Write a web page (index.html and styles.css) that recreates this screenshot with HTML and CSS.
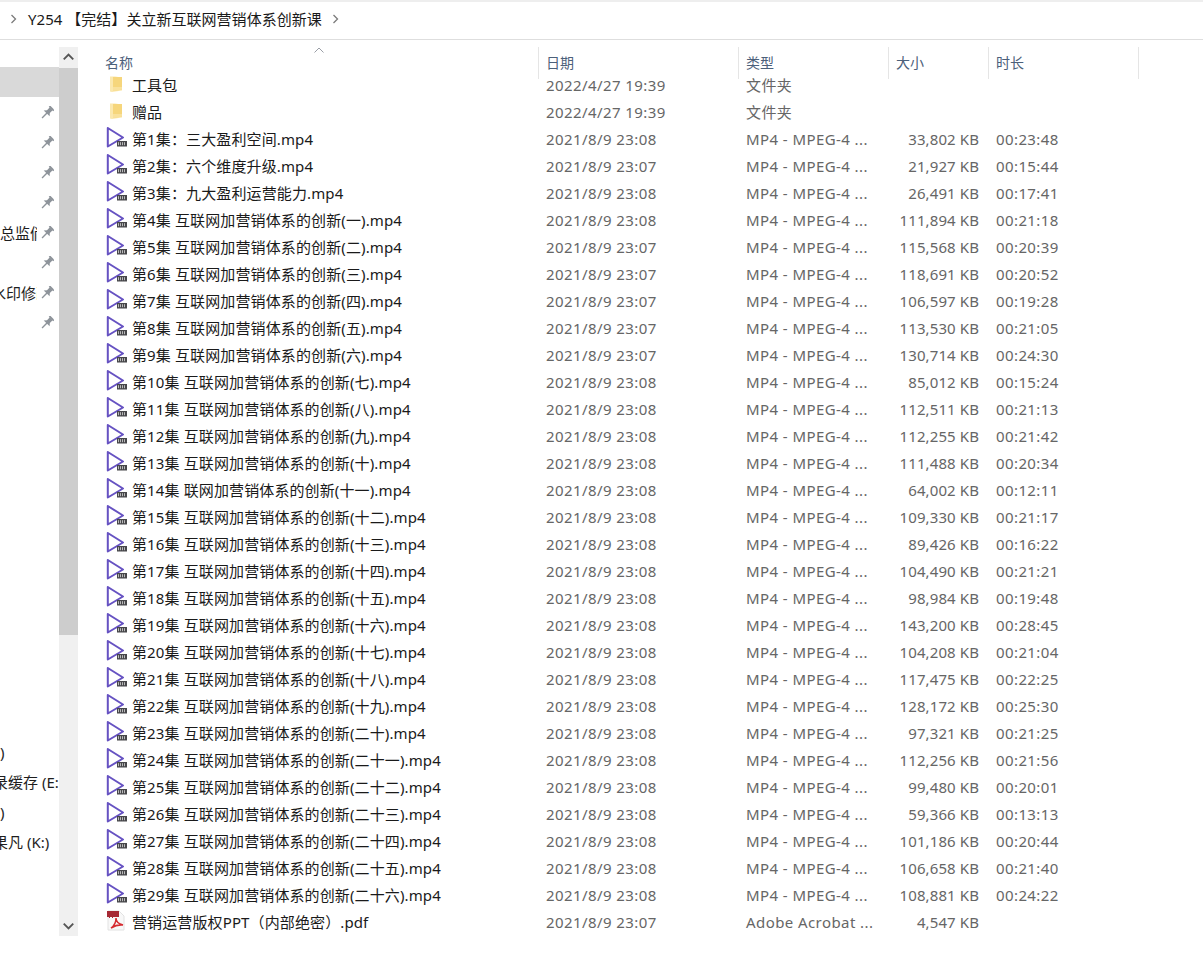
FILE: index.html
```html
<!DOCTYPE html>
<html lang="zh-CN">
<head>
<meta charset="utf-8">
<title>Y254 【完结】关立新互联网营销体系创新课</title>
<link rel="stylesheet" href="styles.css">
</head>
<body>
<svg class="defs" width="0" height="0" aria-hidden="true">
  <symbol id="folder" viewBox="0 0 22 22"><path d="M5 3.500h5l7 1v13l-10 1.500-2-.5z" fill="#fbe8ae"/><path d="M8 4h9v12.500L9 18l-1-1z" fill="#f6d67c"/><path d="M8 14h9v2.500L9 18l-1-1z" fill="#f9e19c"/></symbol>
  <symbol id="play" viewBox="0 0 22 22"><path d="M2.800 1V19.500L18 10.500Z" fill="#fff" stroke="#6652c2" stroke-width="2" stroke-linejoin="round"/><rect x="12" y="14" width="10" height="5.500" fill="#47474a"/><path d="M13.500 15.200v3M15.500 15.200v3M17.500 15.200v3M19.500 15.200v3" stroke="#d8d8d8" stroke-width=".8"/></symbol>
  <symbol id="pdf" viewBox="0 0 22 22"><path d="M3 1h11l5 5v14H3z" fill="#f8f8f8" stroke="#e2e2e2"/><rect x="2" y="1" width="12" height="6" fill="#a62a35"/><path d="M4 7.500h1M7 7.500h1" stroke="#a62a35"/><path d="M6 18c3-2 5-6 5-10 0 4 3 6 7 7-4-.5-8 .5-12 3z" fill="none" stroke="#d52b30" stroke-width="1.500"/></symbol>
  <symbol id="pin" viewBox="0 0 14 14"><g transform="rotate(45 7 7)" fill="#8d939a"><rect x="3.800" y="-.5" width="6.400" height="1.800"/><path d="M5 1h4v4l2.200 2.500H2.800L5 5z"/><path d="M6.300 7h1.400v7H6.300z"/></g></symbol>
</svg>
<header class="crumbs">
  <svg class="chev" viewBox="0 0 8 10"><path d="M1.500 1l4 4-4 4" fill="none" stroke="#7b7b7b" stroke-width="1.300"/></svg>
  <span class="crumb">Y254 【完结】关立新互联网营销体系创新课</span>
  <svg class="chev chev-end" viewBox="0 0 8 10"><path d="M1.500 1l4 4-4 4" fill="none" stroke="#7b7b7b" stroke-width="1.300"/></svg>
</header>
<main class="pane">
  <nav class="nav">
    <div class="nav-list">
      <div class="nav-gap"></div>
      <div class="nav-row nav-sel"></div>
      <div class="nav-row"><svg class="pin"><use href="#pin"/></svg></div>
      <div class="nav-row"><svg class="pin"><use href="#pin"/></svg></div>
      <div class="nav-row"><svg class="pin"><use href="#pin"/></svg></div>
      <div class="nav-row"><svg class="pin"><use href="#pin"/></svg></div>
      <div class="nav-row"><span class="nav-clip"><span class="nav-text">总监倘</span></span><svg class="pin"><use href="#pin"/></svg></div>
      <div class="nav-row"><svg class="pin"><use href="#pin"/></svg></div>
      <div class="nav-row"><span class="nav-clip"><span class="nav-text nav-off">水印修改</span></span><svg class="pin"><use href="#pin"/></svg></div>
      <div class="nav-row"><svg class="pin"><use href="#pin"/></svg></div>
      <div class="nav-spacer"></div>
      <div class="drive"><span class="drive-text">)</span></div>
      <div class="drive"><span class="drive-text drive-off">录缓存 (E:</span></div>
      <div class="drive"><span class="drive-text">)</span></div>
      <div class="drive"><span class="drive-text drive-off">果凡 (K:)</span></div>
    </div>
    <div class="scroll">
      <svg class="arrow" viewBox="0 0 20 20"><path d="M5 12l5-5 5 5" fill="none" stroke="#555" stroke-width="2"/></svg>
      <div class="thumb"></div>
      <div class="track"></div>
      <svg class="arrow" viewBox="0 0 20 20"><path d="M5 8l5 5 5-5" fill="none" stroke="#555" stroke-width="2"/></svg>
    </div>
  </nav>
  <section class="files">
    <div class="head">
      <div class="h h-name">名称<svg class="sort" viewBox="0 0 10 6"><path d="M.5 5.500L5 1l4.500 4.500" fill="none" stroke="#9a9ea6"/></svg></div>
      <div class="h h-date">日期</div>
      <div class="h h-type">类型</div>
      <div class="h h-size">大小</div>
      <div class="h h-dur">时长</div>
    </div>
    <div class="row"><span class="c-name"><svg class="ic"><use href="#folder"/></svg>工具包</span><span class="c-date">2022/4/27 19:39</span><span class="c-type">文件夹</span></div>
    <div class="row"><span class="c-name"><svg class="ic"><use href="#folder"/></svg>赠品</span><span class="c-date">2022/4/27 19:39</span><span class="c-type">文件夹</span></div>
    <div class="row"><span class="c-name"><svg class="ic"><use href="#play"/></svg>第1集：三大盈利空间.mp4</span><span class="c-date">2021/8/9 23:08</span><span class="c-type">MP4 - MPEG-4 ...</span><span class="c-size">33,802 KB</span><span class="c-dur">00:23:48</span></div>
    <div class="row"><span class="c-name"><svg class="ic"><use href="#play"/></svg>第2集：六个维度升级.mp4</span><span class="c-date">2021/8/9 23:07</span><span class="c-type">MP4 - MPEG-4 ...</span><span class="c-size">21,927 KB</span><span class="c-dur">00:15:44</span></div>
    <div class="row"><span class="c-name"><svg class="ic"><use href="#play"/></svg>第3集：九大盈利运营能力.mp4</span><span class="c-date">2021/8/9 23:08</span><span class="c-type">MP4 - MPEG-4 ...</span><span class="c-size">26,491 KB</span><span class="c-dur">00:17:41</span></div>
    <div class="row"><span class="c-name"><svg class="ic"><use href="#play"/></svg>第4集 互联网加营销体系的创新(一).mp4</span><span class="c-date">2021/8/9 23:08</span><span class="c-type">MP4 - MPEG-4 ...</span><span class="c-size">111,894 KB</span><span class="c-dur">00:21:18</span></div>
    <div class="row"><span class="c-name"><svg class="ic"><use href="#play"/></svg>第5集 互联网加营销体系的创新(二).mp4</span><span class="c-date">2021/8/9 23:07</span><span class="c-type">MP4 - MPEG-4 ...</span><span class="c-size">115,568 KB</span><span class="c-dur">00:20:39</span></div>
    <div class="row"><span class="c-name"><svg class="ic"><use href="#play"/></svg>第6集 互联网加营销体系的创新(三).mp4</span><span class="c-date">2021/8/9 23:07</span><span class="c-type">MP4 - MPEG-4 ...</span><span class="c-size">118,691 KB</span><span class="c-dur">00:20:52</span></div>
    <div class="row"><span class="c-name"><svg class="ic"><use href="#play"/></svg>第7集 互联网加营销体系的创新(四).mp4</span><span class="c-date">2021/8/9 23:07</span><span class="c-type">MP4 - MPEG-4 ...</span><span class="c-size">106,597 KB</span><span class="c-dur">00:19:28</span></div>
    <div class="row"><span class="c-name"><svg class="ic"><use href="#play"/></svg>第8集 互联网加营销体系的创新(五).mp4</span><span class="c-date">2021/8/9 23:07</span><span class="c-type">MP4 - MPEG-4 ...</span><span class="c-size">113,530 KB</span><span class="c-dur">00:21:05</span></div>
    <div class="row"><span class="c-name"><svg class="ic"><use href="#play"/></svg>第9集 互联网加营销体系的创新(六).mp4</span><span class="c-date">2021/8/9 23:07</span><span class="c-type">MP4 - MPEG-4 ...</span><span class="c-size">130,714 KB</span><span class="c-dur">00:24:30</span></div>
    <div class="row"><span class="c-name"><svg class="ic"><use href="#play"/></svg>第10集 互联网加营销体系的创新(七).mp4</span><span class="c-date">2021/8/9 23:08</span><span class="c-type">MP4 - MPEG-4 ...</span><span class="c-size">85,012 KB</span><span class="c-dur">00:15:24</span></div>
    <div class="row"><span class="c-name"><svg class="ic"><use href="#play"/></svg>第11集 互联网加营销体系的创新(八).mp4</span><span class="c-date">2021/8/9 23:08</span><span class="c-type">MP4 - MPEG-4 ...</span><span class="c-size">112,511 KB</span><span class="c-dur">00:21:13</span></div>
    <div class="row"><span class="c-name"><svg class="ic"><use href="#play"/></svg>第12集 互联网加营销体系的创新(九).mp4</span><span class="c-date">2021/8/9 23:08</span><span class="c-type">MP4 - MPEG-4 ...</span><span class="c-size">112,255 KB</span><span class="c-dur">00:21:42</span></div>
    <div class="row"><span class="c-name"><svg class="ic"><use href="#play"/></svg>第13集 互联网加营销体系的创新(十).mp4</span><span class="c-date">2021/8/9 23:08</span><span class="c-type">MP4 - MPEG-4 ...</span><span class="c-size">111,488 KB</span><span class="c-dur">00:20:34</span></div>
    <div class="row"><span class="c-name"><svg class="ic"><use href="#play"/></svg>第14集 联网加营销体系的创新(十一).mp4</span><span class="c-date">2021/8/9 23:08</span><span class="c-type">MP4 - MPEG-4 ...</span><span class="c-size">64,002 KB</span><span class="c-dur">00:12:11</span></div>
    <div class="row"><span class="c-name"><svg class="ic"><use href="#play"/></svg>第15集 互联网加营销体系的创新(十二).mp4</span><span class="c-date">2021/8/9 23:08</span><span class="c-type">MP4 - MPEG-4 ...</span><span class="c-size">109,330 KB</span><span class="c-dur">00:21:17</span></div>
    <div class="row"><span class="c-name"><svg class="ic"><use href="#play"/></svg>第16集 互联网加营销体系的创新(十三).mp4</span><span class="c-date">2021/8/9 23:08</span><span class="c-type">MP4 - MPEG-4 ...</span><span class="c-size">89,426 KB</span><span class="c-dur">00:16:22</span></div>
    <div class="row"><span class="c-name"><svg class="ic"><use href="#play"/></svg>第17集 互联网加营销体系的创新(十四).mp4</span><span class="c-date">2021/8/9 23:08</span><span class="c-type">MP4 - MPEG-4 ...</span><span class="c-size">104,490 KB</span><span class="c-dur">00:21:21</span></div>
    <div class="row"><span class="c-name"><svg class="ic"><use href="#play"/></svg>第18集 互联网加营销体系的创新(十五).mp4</span><span class="c-date">2021/8/9 23:08</span><span class="c-type">MP4 - MPEG-4 ...</span><span class="c-size">98,984 KB</span><span class="c-dur">00:19:48</span></div>
    <div class="row"><span class="c-name"><svg class="ic"><use href="#play"/></svg>第19集 互联网加营销体系的创新(十六).mp4</span><span class="c-date">2021/8/9 23:08</span><span class="c-type">MP4 - MPEG-4 ...</span><span class="c-size">143,200 KB</span><span class="c-dur">00:28:45</span></div>
    <div class="row"><span class="c-name"><svg class="ic"><use href="#play"/></svg>第20集 互联网加营销体系的创新(十七).mp4</span><span class="c-date">2021/8/9 23:08</span><span class="c-type">MP4 - MPEG-4 ...</span><span class="c-size">104,208 KB</span><span class="c-dur">00:21:04</span></div>
    <div class="row"><span class="c-name"><svg class="ic"><use href="#play"/></svg>第21集 互联网加营销体系的创新(十八).mp4</span><span class="c-date">2021/8/9 23:08</span><span class="c-type">MP4 - MPEG-4 ...</span><span class="c-size">117,475 KB</span><span class="c-dur">00:22:25</span></div>
    <div class="row"><span class="c-name"><svg class="ic"><use href="#play"/></svg>第22集 互联网加营销体系的创新(十九).mp4</span><span class="c-date">2021/8/9 23:08</span><span class="c-type">MP4 - MPEG-4 ...</span><span class="c-size">128,172 KB</span><span class="c-dur">00:25:30</span></div>
    <div class="row"><span class="c-name"><svg class="ic"><use href="#play"/></svg>第23集 互联网加营销体系的创新(二十).mp4</span><span class="c-date">2021/8/9 23:08</span><span class="c-type">MP4 - MPEG-4 ...</span><span class="c-size">97,321 KB</span><span class="c-dur">00:21:25</span></div>
    <div class="row"><span class="c-name"><svg class="ic"><use href="#play"/></svg>第24集 互联网加营销体系的创新(二十一).mp4</span><span class="c-date">2021/8/9 23:08</span><span class="c-type">MP4 - MPEG-4 ...</span><span class="c-size">112,256 KB</span><span class="c-dur">00:21:56</span></div>
    <div class="row"><span class="c-name"><svg class="ic"><use href="#play"/></svg>第25集 互联网加营销体系的创新(二十二).mp4</span><span class="c-date">2021/8/9 23:08</span><span class="c-type">MP4 - MPEG-4 ...</span><span class="c-size">99,480 KB</span><span class="c-dur">00:20:01</span></div>
    <div class="row"><span class="c-name"><svg class="ic"><use href="#play"/></svg>第26集 互联网加营销体系的创新(二十三).mp4</span><span class="c-date">2021/8/9 23:08</span><span class="c-type">MP4 - MPEG-4 ...</span><span class="c-size">59,366 KB</span><span class="c-dur">00:13:13</span></div>
    <div class="row"><span class="c-name"><svg class="ic"><use href="#play"/></svg>第27集 互联网加营销体系的创新(二十四).mp4</span><span class="c-date">2021/8/9 23:08</span><span class="c-type">MP4 - MPEG-4 ...</span><span class="c-size">101,186 KB</span><span class="c-dur">00:20:44</span></div>
    <div class="row"><span class="c-name"><svg class="ic"><use href="#play"/></svg>第28集 互联网加营销体系的创新(二十五).mp4</span><span class="c-date">2021/8/9 23:08</span><span class="c-type">MP4 - MPEG-4 ...</span><span class="c-size">106,658 KB</span><span class="c-dur">00:21:40</span></div>
    <div class="row"><span class="c-name"><svg class="ic"><use href="#play"/></svg>第29集 互联网加营销体系的创新(二十六).mp4</span><span class="c-date">2021/8/9 23:08</span><span class="c-type">MP4 - MPEG-4 ...</span><span class="c-size">108,881 KB</span><span class="c-dur">00:24:22</span></div>
    <div class="row"><span class="c-name"><svg class="ic"><use href="#pdf"/></svg>营销运营版权PPT（内部绝密）.pdf</span><span class="c-date">2021/8/9 23:07</span><span class="c-type">Adobe Acrobat ...</span><span class="c-size">4,547 KB</span></div>
  </section>
</main>
</body>
</html>
```
FILE: styles.css
```css
* { box-sizing: border-box; }
html, body { margin: 0; height: 100%; background: #fff; overflow: hidden; }
body { font: 15px/20px "Noto Sans", "Noto Sans CJK SC", sans-serif; color: #1e1e1e; }
.defs { display: block; height: 0; }

.crumbs { height: 40px; border-top: 2px solid #eeeeee; border-bottom: 1px solid #dedede; display: flex; align-items: center; padding: 0 0 3px 10px; white-space: nowrap; }
.crumb { margin-left: 10px; color: #1a1a1a; letter-spacing: .03px; }
.chev { width: 8px; height: 10px; flex: none; }
.chev-end { margin-left: 10px; }

.pane { display: flex; height: 896px; padding-top: 7px; }
.nav { width: 79px; display: flex; flex: none; }
.nav-list { width: 59px; overflow: hidden; display: flex; flex-direction: column; }
.nav-gap { height: 20px; flex: none; }
.nav-row { height: 30px; flex: none; display: flex; align-items: center; justify-content: flex-end; white-space: nowrap; padding: 1px 5px 0 0; }
.nav-sel { background: #d9d9d9; }
.nav-clip { width: 38px; overflow: hidden; margin-right: 1px; flex: none; display: block; }
.nav-row .pin { margin-left: 2px; }
.nav-text { display: block; margin-left: 1px; }
.nav-off { margin-left: -8px; }
.nav-spacer { height: 400px; flex: none; }
.drive { height: 30px; flex: none; display: flex; align-items: center; white-space: nowrap; }
.drive-off { margin-left: -7px; }
.pin { width: 14px; height: 14px; flex: none; }

.scroll { width: 19px; height: 889px; background: #f0f0f0; display: flex; flex-direction: column; }
.arrow { height: 21px; width: 19px; flex: none; }
.thumb { height: 567px; background: #cdcdcd; flex: none; }
.track { flex: 1; }

.files { flex: 1; padding-left: 26px; }
.head { display: flex; height: 32px; margin-bottom: -8px; position: relative; color: #4c607a; }
.h { position: relative; padding: 6px 0 0 7px; font-size: 14px; border-right: 1px solid #e5e5e5; flex: none; }
.h-name { width: 434px; padding-left: 0; }
.h-date { width: 200px; }
.h-type { width: 150px; }
.h-size { width: 100px; }
.h-dur { width: 150px; }
.sort { position: absolute; left: 209px; top: 0; width: 10px; height: 6px; }

.row { display: flex; height: 27px; align-items: center; white-space: nowrap; color: #666; }
.row > span { flex: none; }
.c-name { width: 441px; display: flex; align-items: center; color: #1a1a1a; letter-spacing: .12px; }
.ic { width: 22px; height: 22px; margin: -2px 5px 0 0; flex: none; }
.c-date { width: 200px; letter-spacing: .42px; }
.c-type { width: 140px; letter-spacing: .42px; }
.c-size { width: 93px; text-align: right; letter-spacing: .1px; }
.c-dur { margin-left: 17px; letter-spacing: .4px; }
```
